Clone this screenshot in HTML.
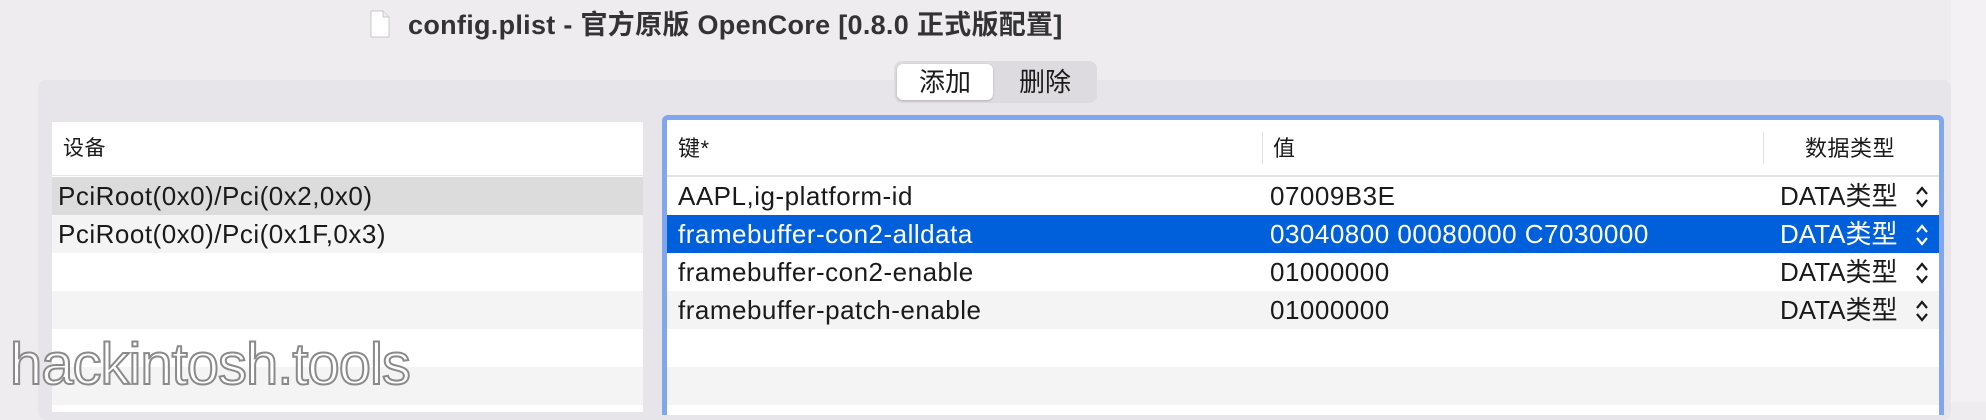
<!DOCTYPE html>
<html><head><meta charset="utf-8"><style>
*{margin:0;padding:0;box-sizing:border-box}
body{width:1986px;height:402px;overflow:hidden;background:#efecf0;font-family:"Liberation Sans","Noto Sans CJK SC",sans-serif;position:relative;color:#1a1a1a}
.abs{position:absolute}
.title{left:408px;top:8px;font-size:27px;font-weight:bold;color:#333;white-space:nowrap;line-height:34px;letter-spacing:0.3px}
.panel{left:38px;top:80px;width:1913px;height:340px;background:#e8e5ea;border-radius:8px}
.seg{left:894px;top:61px;width:203px;height:42px;background:#dedbe0;border-radius:8px;font-size:26px}
.seg div{position:absolute;top:3px;height:36px;line-height:36px;text-align:center}
.lt{left:52px;top:122px;width:591px;height:290px;background:#fff}
.row{position:absolute;left:0;right:0;height:38px;line-height:38px;font-size:26px;white-space:nowrap;letter-spacing:0.5px}
.rt{left:662px;top:115px;width:1282px;height:300px;border:5px solid #80a6ee;border-bottom:none;border-radius:6px 6px 0 0;background:#fff;overflow:hidden}
.c{position:absolute;top:0}
.wm{left:10px;top:334px;font-size:58px;font-family:"Liberation Sans",sans-serif;color:#fff;-webkit-text-stroke:2px #8a8a8a;letter-spacing:-1px;line-height:62px}
</style></head><body>
<div class="abs panel"></div>
<div class="abs" style="left:1951px;top:0;width:35px;height:402px;background:#f3f1f4"></div>
<svg class="abs" style="left:370px;top:10px" width="20" height="28" viewBox="0 0 20 28"><path d="M1 1H13L19 7V27H1Z" fill="#fff" stroke="#c8c8c8"/><path d="M13 1V7H19" fill="#eee" stroke="#c8c8c8"/></svg>
<div class="abs title">config.plist - 官方原版 OpenCore [0.8.0 正式版配置]</div>
<div class="abs seg"><div style="left:3px;width:96px;background:#fff;border-radius:6px;box-shadow:0 1px 2px rgba(0,0,0,.2)">添加</div><div style="left:102px;width:98px">删除</div></div>
<div class="abs lt">
<div class="row" style="top:0;height:54px;line-height:54px;padding-left:11px;font-size:21px;border-bottom:1px solid #e6e6e6">设备</div>
<div class="row" style="top:55px;background:#dcdcdc;padding-left:6px">PciRoot(0x0)/Pci(0x2,0x0)</div>
<div class="row" style="top:93px;background:#f4f4f4;padding-left:6px">PciRoot(0x0)/Pci(0x1F,0x3)</div>
<div class="row" style="top:131px;background:#fff"></div>
<div class="row" style="top:169px;background:#f4f4f4"></div>
<div class="row" style="top:207px;background:#fff"></div>
<div class="row" style="top:245px;background:#f4f4f4"></div>
</div>
<div class="abs rt">
<div class="row" style="top:0;height:57px;line-height:57px;font-size:22px;border-bottom:2px solid #e4e4e4">
<span class="c" style="left:11px">键*</span>
<span class="c" style="left:595px;top:12px;width:1px;height:32px;background:#e0e0e0"></span>
<span class="c" style="left:606px">值</span>
<span class="c" style="left:1096px;top:12px;width:1px;height:32px;background:#e0e0e0"></span>
<span class="c" style="left:1138px">数据类型</span>
</div>
<div id="rows"></div>
</div>
<div class="abs wm">hackintosh.tools</div>
<script>
var d=[["AAPL,ig-platform-id","07009B3E","#fff","#1a1a1a"],["framebuffer-con2-alldata","03040800 00080000 C7030000","#0060db","#fff"],["framebuffer-con2-enable","01000000","#fff","#1a1a1a"],["framebuffer-patch-enable","01000000","#f4f4f4","#1a1a1a"],["","","#fff",""],["","","#f4f4f4",""]];
var h="";d.forEach(function(r,i){h+='<div class="row" style="top:'+(57+i*38)+'px;background:'+r[2]+';color:'+r[3]+'">'+(r[0]?'<span class="c" style="left:11px">'+r[0]+'</span><span class="c" style="left:603px">'+r[1]+'</span><span class="c" style="left:1113px;letter-spacing:0">DATA类型</span><svg class="c" style="left:1247px;top:8px" width="16" height="24" viewBox="0 0 16 24"><path d="M3 9L8 3L13 9M3 15L8 21L13 15" fill="none" stroke="'+r[3]+'" stroke-width="2.2"/></svg>':'')+'</div>'});
document.getElementById("rows").innerHTML=h;
</script>
</body></html>
